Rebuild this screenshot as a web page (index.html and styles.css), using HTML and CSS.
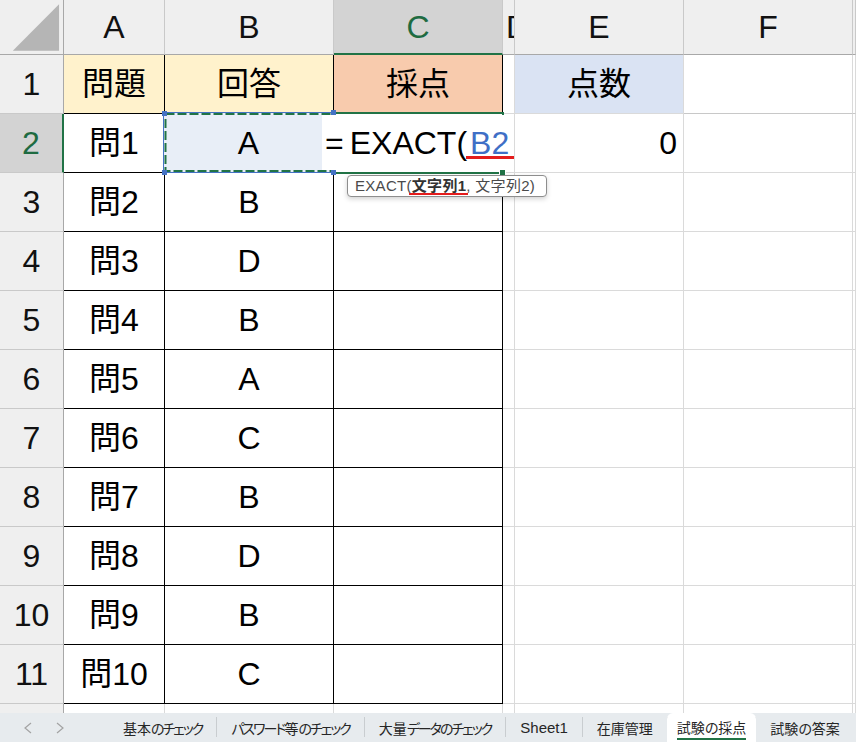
FILE: index.html
```html
<!DOCTYPE html>
<html lang="ja">
<head>
<meta charset="utf-8">
<title>試験の採点</title>
<link rel="stylesheet" href="styles.css">
</head>
<body>
<div class="app">
  <div class="sheet">
    <div class="grid">
      <div class="corner"><svg width="64" height="55" viewBox="0 0 64 55"><polygon points="13,51 60,4 60,51" fill="#b5b5b5"/></svg></div>
      <div class="hdr">A</div><div class="hdr">B</div><div class="hdr sel">C</div><div class="hdr hd">D</div><div class="hdr">E</div><div class="hdr">F</div><div class="hdr"></div>

      <div class="rh">1</div><div class="c t y">問題</div><div class="c t y">回答</div><div class="c t o">採点</div><div class="c"></div><div class="c bl">点数</div><div class="c r1"></div><div class="c r1"></div>

      <div class="rh sel">2</div><div class="c t">問1</div><div class="c t"></div><div class="c t"></div><div class="c"></div><div class="c num">0</div><div class="c"></div><div class="c"></div>

      <div class="rh">3</div><div class="c t">問2</div><div class="c t">B</div><div class="c t"></div><div class="c"></div><div class="c"></div><div class="c"></div><div class="c"></div>
      <div class="rh">4</div><div class="c t">問3</div><div class="c t">D</div><div class="c t"></div><div class="c"></div><div class="c"></div><div class="c"></div><div class="c"></div>
      <div class="rh">5</div><div class="c t">問4</div><div class="c t">B</div><div class="c t"></div><div class="c"></div><div class="c"></div><div class="c"></div><div class="c"></div>
      <div class="rh">6</div><div class="c t">問5</div><div class="c t">A</div><div class="c t"></div><div class="c"></div><div class="c"></div><div class="c"></div><div class="c"></div>
      <div class="rh">7</div><div class="c t">問6</div><div class="c t">C</div><div class="c t"></div><div class="c"></div><div class="c"></div><div class="c"></div><div class="c"></div>
      <div class="rh">8</div><div class="c t">問7</div><div class="c t">B</div><div class="c t"></div><div class="c"></div><div class="c"></div><div class="c"></div><div class="c"></div>
      <div class="rh">9</div><div class="c t">問8</div><div class="c t">D</div><div class="c t"></div><div class="c"></div><div class="c"></div><div class="c"></div><div class="c"></div>
      <div class="rh">10</div><div class="c t">問9</div><div class="c t">B</div><div class="c t"></div><div class="c"></div><div class="c"></div><div class="c"></div><div class="c"></div>
      <div class="rh">11</div><div class="c t">問10</div><div class="c t">C</div><div class="c t"></div><div class="c"></div><div class="c"></div><div class="c"></div><div class="c"></div>
      <div class="rh"></div><div class="c"></div><div class="c"></div><div class="c"></div><div class="c"></div><div class="c"></div><div class="c"></div><div class="c"></div>
    </div>

    <div class="ref">
      <svg class="ants" width="171" height="61" viewBox="0 0 171 61"><rect x="0.5" y="0.5" width="170" height="60" fill="none" stroke="#4472c4" stroke-width="1"/><rect x="2.5" y="2" width="166" height="57" fill="none" stroke="#217346" stroke-width="2" stroke-dasharray="9 3"/></svg>
      <span class="reftext">A</span>
    </div>
    <div class="active"></div>
    <div class="edit"><span class="eq">=</span>EXACT(<span class="refb">B2</span><span class="redline"></span></div>
    <span class="handle h1"></span><span class="handle h2"></span><span class="handle h3"></span><span class="handle h4"></span>
    <span class="fill"></span>
    <div class="tip">EXACT(<b>文字列1</b>, 文字列2)<span class="tipline"></span></div>
  </div>

  <div class="tabs">
    <div class="nav">
      <svg width="14" height="14" viewBox="0 0 14 14"><path d="M10 2 L4 7 L10 12" fill="none" stroke="#a3a3a3" stroke-width="1.2"/></svg>
      <svg width="14" height="14" viewBox="0 0 14 14"><path d="M4 2 L10 7 L4 12" fill="none" stroke="#a3a3a3" stroke-width="1.2"/></svg>
    </div>
    <div class="tab">基本<span class="k">のチェック</span></div><span class="sep"></span>
    <div class="tab"><span class="k">パスワード</span>等<span class="k">のチェック</span></div><span class="sep"></span>
    <div class="tab">大量<span class="k">データのチェック</span></div><span class="sep"></span>
    <div class="tab lat">Sheet1</div><span class="sep"></span>
    <div class="tab">在庫管理</div><span class="sep"></span>
    <div class="tab on"><span class="ul">試験の採点</span></div><span class="sep"></span>
    <div class="tab">試験の答案</div>
  </div>
</div>
</body>
</html>
```

FILE: styles.css
```css
body {
  margin: 0;
  overflow: hidden;
  background: #fff;
  font-family: "Liberation Sans", "Noto Sans CJK JP", sans-serif;
}
.app {
  width: 856px;
  height: 742px;
  display: flex;
  flex-direction: column;
}
.sheet {
  position: relative;
  height: 713px;
  flex: none;
  overflow: hidden;
}
.grid {
  display: grid;
  grid-template-columns: 64px 101px 169px 169px 12px 169px 169px 1fr;
  grid-template-rows: 55px repeat(12, 59px);
}
.grid > div {
  box-sizing: border-box;
  border-right: 1px solid #dadada;
  border-bottom: 1px solid #dadada;
  display: flex;
  align-items: center;
  justify-content: center;
  font-size: 32px;
  line-height: 1;
  color: #000;
  overflow: hidden;
  white-space: nowrap;
}
.grid > .corner {
  background: #efefef;
  border-right: 1px solid #a8a8a8;
  border-bottom: 1px solid #a8a8a8;
  align-items: stretch;
  justify-content: stretch;
}
.grid > .hdr {
  background: #efefef;
  border-right: 1px solid #c9c9c9;
  border-bottom: 1px solid #a8a8a8;
  color: #111;
}
.grid > .hdr.sel {
  background: #d3d3d3;
  color: #1e6b41;
  border-bottom: 2px solid #217346;
}
.grid > .hdr.hd {
  justify-content: flex-start;
  padding-left: 3px;
}
.grid > .rh {
  background: #efefef;
  border-right: 1px solid #a8a8a8;
  border-bottom: 1px solid #c9c9c9;
  color: #111;
}
.grid > .rh.sel {
  background: #d3d3d3;
  color: #1e6b41;
  border-right: 2px solid #217346;
}
.grid > .t {
  border-right-color: #000;
  border-bottom-color: #000;
}
.grid > .y { background: #fff2cc; }
.grid > .o { background: #f8cbad; }
.grid > .bl { background: #dae3f3; }
.grid > .r1 { border-bottom-color: #c8c8c8; }
.grid > .num {
  justify-content: flex-end;
  padding-right: 6px;
}

/* reference highlight on B2 */
.ref {
  position: absolute;
  left: 163px;
  top: 112px;
  width: 171px;
  height: 61px;
  background: #e8eef7;
  display: flex;
  align-items: center;
  justify-content: center;
  font-size: 32px;
  line-height: 1;
}
.ants {
  position: absolute;
  left: 0;
  top: 0;
}
.reftext { position: relative; }

.active {
  position: absolute;
  left: 333px;
  top: 112px;
  width: 171px;
  height: 62px;
  box-sizing: border-box;
  border: 2px solid #217346;
}
.edit {
  position: absolute;
  left: 322px;
  top: 115px;
  width: 192px;
  height: 55px;
  background: #fff;
  display: flex;
  align-items: center;
  font-size: 32px;
  line-height: 1;
  white-space: nowrap;
  overflow: hidden;
  color: #000;
}
.eq {
  margin-left: 3px;
  margin-right: 6px;
}
.refb { color: #3f6fc6; margin-left: 3px; }
.redline {
  position: absolute;
  left: 144px;
  top: 41px;
  width: 48px;
  height: 3px;
  background: #e41c1c;
}
.handle {
  position: absolute;
  width: 5px;
  height: 5px;
  background: #4472c4;
}
.h1 { left: 162px; top: 111px; }
.h2 { left: 331px; top: 110px; }
.h3 { left: 162px; top: 170px; }
.h4 { left: 331px; top: 170px; }
.fill {
  position: absolute;
  left: 500px;
  top: 170px;
  width: 5px;
  height: 5px;
  background: #217346;
  border: 1px solid #fff;
  box-sizing: content-box;
  margin: -1px 0 0 -1px;
}
.tip {
  position: absolute;
  left: 347px;
  top: 175px;
  width: 200px;
  height: 22px;
  box-sizing: border-box;
  border: 1px solid #8e8e8e;
  border-radius: 4px;
  background: #fff;
  box-shadow: 0 2px 5px rgba(0,0,0,0.18);
  font-size: 15px;
  line-height: 20px;
  padding-left: 7px;
  color: #4a4a4a;
  white-space: nowrap;
  letter-spacing: 0.3px;
}
.tip b { color: #333; }
.tipline {
  position: absolute;
  left: 61px;
  top: 17px;
  width: 59px;
  height: 2px;
  background: #e41c1c;
}

/* sheet tabs */
.tabs {
  flex: none;
  height: 29px;
  background: #e7ebee;
  display: flex;
  align-items: stretch;
  font-size: 14px;
  color: #262626;
  font-feature-settings: "palt";
  overflow: hidden;
}
.nav {
  flex: none;
  width: 109px;
  display: flex;
  align-items: center;
  gap: 18px;
  padding-left: 21px;
  box-sizing: border-box;
}
.tab {
  flex: none;
  display: flex;
  align-items: center;
  padding: 0 14px;
  white-space: nowrap;
}
.tab.lat { font-size: 15px; }
.k { letter-spacing: -2px; }
.tab.on {
  background: #fff;
  border-radius: 6px 6px 0 0;
  padding: 0 10px;
  margin: 0 -1px;
  position: relative;
}
.ul {
  border-bottom: 2px solid #217346;
  padding-bottom: 1px;
  margin-top: 2px;
}
.sep {
  flex: none;
  width: 1px;
  background: #c9cdd0;
  margin: 4px 0 5px;
}
```
